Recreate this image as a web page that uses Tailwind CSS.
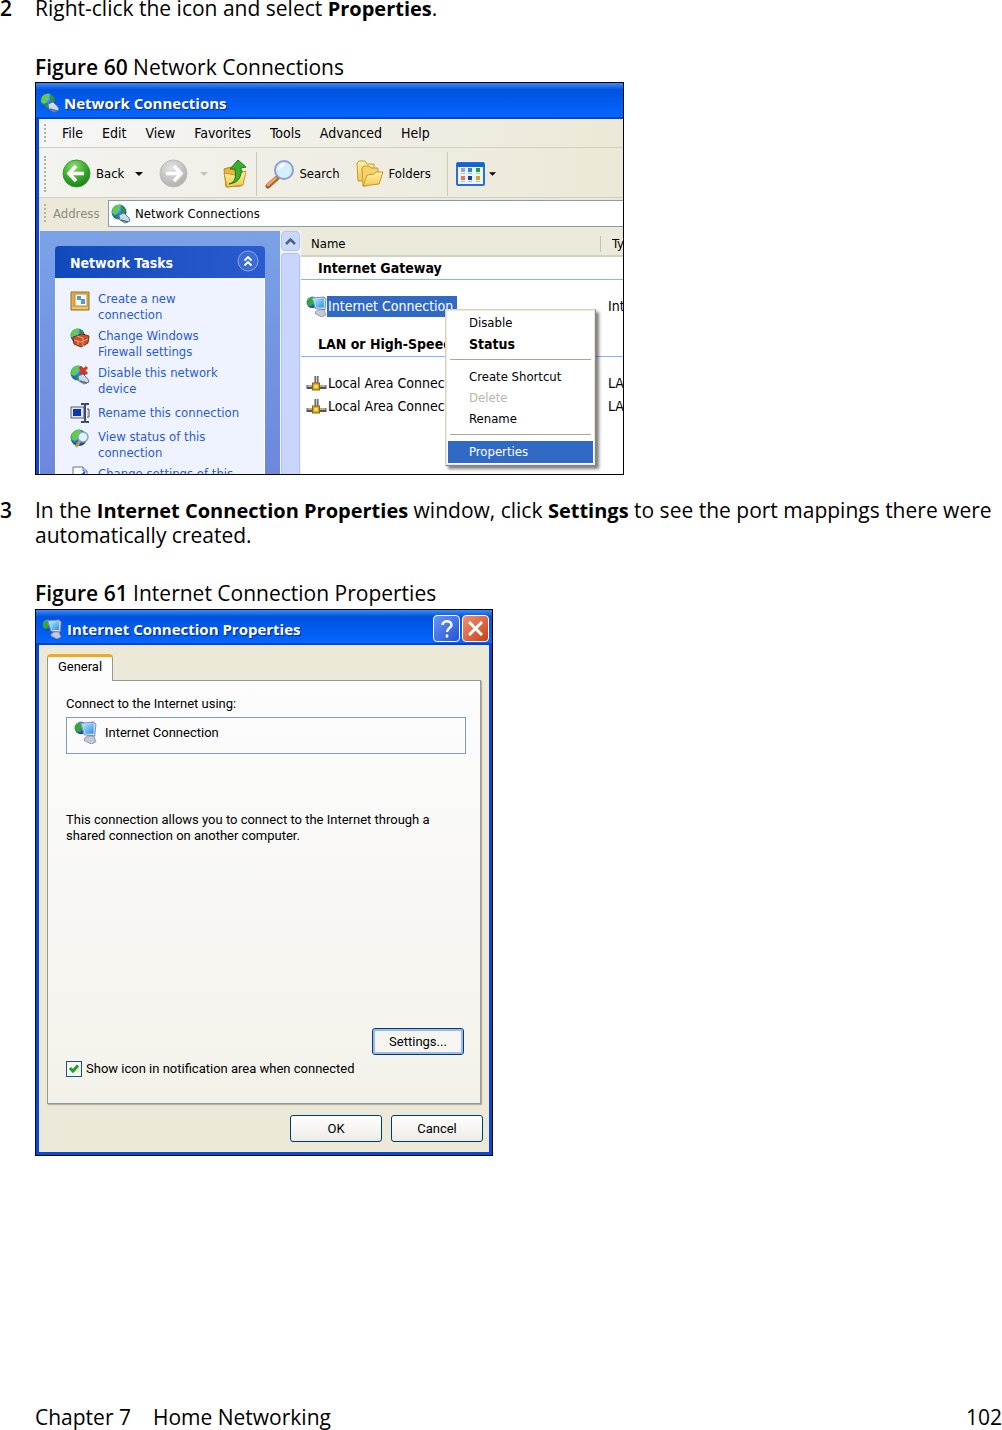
<!DOCTYPE html>
<html lang="en">
<head>
    <meta charset="UTF-8">
    <meta name="viewport" content="width=device-width, initial-scale=1.0">
    <title>Chapter 7 Home Networking</title>
    <script src="https://cdn.jsdelivr.net/npm/@tailwindcss/browser@4"></script>
</head>
<body class="bg-white text-black font-['Open_Sans',sans-serif] text-[21px] leading-[25px]">
    <!-- Shared icons -->
    <svg class="absolute size-0">
        <defs>
            <linearGradient id="screen" x1="0" y1="0" x2="1" y2="1">
                <stop offset="0" stop-color="#b5f0ff" />
                <stop offset="1" stop-color="#2f8fe6" />
            </linearGradient>
            <linearGradient id="folder" x1="0" y1="0" x2="0" y2="1">
                <stop offset="0" stop-color="#fff3a6" />
                <stop offset="1" stop-color="#f2c84b" />
            </linearGradient>
            <radialGradient id="ocean" cx="0.35" cy="0.3" r="0.75">
                <stop offset="0" stop-color="#8fd0ff" />
                <stop offset="0.5" stop-color="#2877d8" />
                <stop offset="1" stop-color="#0b3f96" />
            </radialGradient>
            <radialGradient id="green" cx="0.4" cy="0.25" r="0.8">
                <stop offset="0" stop-color="#8be06c" />
                <stop offset="0.6" stop-color="#35a52b" />
                <stop offset="1" stop-color="#1c7a17" />
            </radialGradient>
            <radialGradient id="gray" cx="0.4" cy="0.3" r="0.8">
                <stop offset="0" stop-color="#e4e4e2" />
                <stop offset="1" stop-color="#a9a9a9" />
            </radialGradient>
        </defs>
        <symbol id="globe" viewBox="0 0 20 20">
            <circle cx="8" cy="8" r="7.5" fill="url(#ocean)" />
            <path d="M2 4C4 1 8 0 10 1L9 4L6 6L7 9L4 11L1 9Z" fill="#5fd03c" />
            <path d="M11 3L14 4L15 8L12 9L10 6ZM5 12L8 12L9 15L6 15Z" fill="#2f9a22" />
        </symbol>
        <symbol id="net-globe" viewBox="0 0 20 20">
            <use href="#globe" width="20" height="20" />
            <path d="M8 11L13 9L18 14L19 17L14 19L9 16Z" fill="#c9dcec" stroke="#5f7f9f" />
            <path d="M10 16L17 18" stroke="#5d6b78" stroke-width="1.5" />
        </symbol>
        <symbol id="net-pc" viewBox="0 0 20 20">
            <circle cx="6" cy="6" r="5.5" fill="url(#ocean)" />
            <path d="M1 4L5 1L7 3L6 8L4 10L1 8Z" fill="#36a829" />
            <path d="M6 2L17 1L19 3L18 13L9 12Z" fill="#d7ddea" stroke="#8693b4" />
            <path d="M7 3L17 2L17 11L10 11Z" fill="url(#screen)" />
            <path d="M12 13L17 13L19 18L15 20L9 17L9 15Z" fill="#c5c9da" stroke="#7b82a0" stroke-width=".7" />
        </symbol>
        <symbol id="lan" viewBox="0 0 20 16">
            <path d="M10 1V10M0 12H20" stroke="#555" stroke-width="4" />
            <path d="M10 1V9M1 11H19" stroke="#c9c9c9" stroke-width="1.5" />
            <rect x="6" y="8" width="7" height="7" fill="#e2a81b" stroke="#8a6510" />
            <rect x="8" y="10" width="3" height="3" fill="#ffe88a" />
        </symbol>
    </svg>

    <div class="min-h-screen flex flex-col">
        <main>
            <p class="flex leading-4"><span class="w-[35px] shrink-0 font-semibold">2</span><span>Right-click the icon and select <b class="text-[20px]">Properties</b>.</span></p>

            <!-- Figure 60 -->
            <figure class="pl-[35px] mt-[38px]">
                <figcaption class="mb-0.5"><span class="font-semibold">Figure 60</span> Network Connections</figcaption>
                <div class="relative w-full max-w-[589px] h-[393px] overflow-hidden flex flex-col border border-black bg-[#ece9d8] font-['DejaVu_Sans_Condensed','DejaVu_Sans',sans-serif] text-[13px] leading-4">
                    <div class="h-9 shrink-0 flex items-center gap-1 px-1 pt-1.5 bg-linear-to-b from-[#3c8cf5] via-[#0052e0] via-20% to-[#0566ff] border-b-2 border-[#0045d0]">
                        <svg class="size-5"><use href="#net-globe" /></svg>
                        <h2 class="text-white font-bold font-['Open_Sans',sans-serif] text-[15px] [text-shadow:1px_1px_1px_#0a2a80]">Network Connections</h2>
                    </div>
                    <div class="flex-1 min-h-0 flex flex-col border-l-3 border-[#0848d8]">
                        <!-- Menu bar -->
                        <div class="h-[29px] shrink-0 flex items-center gap-[19px] pl-[5px] text-[14px] border-b border-[#d3cfbd] bg-linear-to-r from-[#f6f6f6] to-[#ece9d8]">
                            <span class="h-[18px] -mr-[3px] border-l-2 border-dotted border-[#b5b2a4]"></span>
                            <button>File</button>
                            <button>Edit</button>
                            <button>View</button>
                            <button>Favorites</button>
                            <button>Tools</button>
                            <button>Advanced</button>
                            <button>Help</button>
                        </div>
                        <!-- Toolbar -->
                        <div class="h-[50px] shrink-0 flex items-center pl-[5px] pt-0.5 border-b border-[#d3cfbd] bg-linear-to-r from-[#f3f3f0] to-[#ece9d8]">
                            <span class="h-9 mr-4 border-l-2 border-dotted border-[#b5b2a4]"></span>
                            <button class="flex items-center gap-[5px]">
                                <svg class="size-[29px]" viewBox="0 0 29 29">
                                    <circle cx="14.5" cy="14.5" r="13.5" fill="url(#green)" stroke="#3b9a33" />
                                    <path d="M14 7L7 14.5L14 22M7.500 14.500H22" stroke="#fff" stroke-width="3.500" fill="none" />
                                </svg>
                                Back
                                <svg class="w-2 h-1 ml-1.5" viewBox="0 0 8 4"><path d="M0 0H8L4 4Z" /></svg>
                            </button>
                            <button class="flex items-center gap-3 ml-4" aria-label="Forward">
                                <svg class="size-[29px]" viewBox="0 0 29 29">
                                    <circle cx="14.5" cy="14.5" r="13.5" fill="url(#gray)" stroke="#bcbcbc" />
                                    <path d="M15 7L22 14.5L15 22M21.500 14.500H7" stroke="#fff" stroke-width="3.500" fill="none" />
                                </svg>
                                <svg class="w-2 h-1" viewBox="0 0 8 4"><path d="M0 0H8L4 4Z" fill="#c5c3b8" /></svg>
                            </button>
                            <button class="ml-3.5" aria-label="Up">
                                <svg class="w-[26px] h-[30px]" viewBox="0 0 26 30">
                                    <path d="M2 10L9 8L11 11L21 12L19 27L4 28Z" fill="#e9b73c" stroke="#b98718" />
                                    <path d="M2 14L13 16L24 12L21 26L5 28Z" fill="url(#folder)" stroke="#c9952a" />
                                    <path d="M7 25C14 23 14 17 13 10L8 10L16 1L24 8L19 9C20 17 17 24 7 25Z" fill="#3cae30" stroke="#197b15" />
                                </svg>
                            </button>
                            <span class="w-px h-11 mx-2 bg-[#cdc9b5]"></span>
                            <button class="flex items-center gap-1">
                                <svg class="size-[30px]" viewBox="0 0 30 30">
                                    <path d="M12 19L3 27" stroke="#a35f28" stroke-width="5" stroke-linecap="round" />
                                    <path d="M11 19L3 26" stroke="#eba464" stroke-width="2.500" stroke-linecap="round" />
                                    <circle cx="19" cy="11" r="9" fill="#d2f0ff" stroke="#8d9fd4" stroke-width="2" />
                                    <path d="M13 11C13 7 17 4 21 5C18 7 17 9 13 11Z" fill="#fff" />
                                </svg>
                                Search
                            </button>
                            <button class="flex items-center gap-[5px] ml-4">
                                <svg class="w-7 h-[28px]" viewBox="0 0 28 28">
                                    <path d="M1 3L3 1H9L11 4H18V8L8 21H2Z" fill="url(#folder)" stroke="#c9982c" />
                                    <path d="M6 8L8 6H13L15 8H22V14L10 26H7Z" fill="#f5d56b" stroke="#c9982c" />
                                    <path d="M7 26L11 15L18 14L20 12H27L23 24Z" fill="url(#folder)" stroke="#c9982c" />
                                </svg>
                                Folders
                            </button>
                            <span class="w-px h-11 ml-4 mr-2 bg-[#cdc9b5]"></span>
                            <button class="flex items-center gap-1" aria-label="Views">
                                <svg class="w-[29px] h-6" viewBox="0 0 29 24">
                                    <rect x="1" y="1" width="27" height="22" rx="1" fill="#eaf5ff" stroke="#2b6fd4" stroke-width="2" />
                                    <path d="M1 3H28" stroke="#1463d6" stroke-width="4" />
                                    <path d="M5 11.500H9M12 11.500H16M20 11.500H24M5 19.500H9M12 19.500H16M20 19.500H24" stroke="#b8bfc9" />
                                    <path d="M5 8H9" stroke="#a79bd4" stroke-width="4" /><path d="M12 8H16" stroke="#2b86e0" stroke-width="4" /><path d="M20 8H24" stroke="#18a428" stroke-width="4" />
                                    <path d="M5 16H9" stroke="#f0744a" stroke-width="4" /><path d="M12 16H16" stroke="#123fa8" stroke-width="4" /><path d="M20 16H24" stroke="#d7a51e" stroke-width="4" />
                                </svg>
                                <svg class="w-[7px] h-1" viewBox="0 0 8 4"><path d="M0 0H8L4 4Z" /></svg>
                            </button>
                        </div>
                        <!-- Address bar -->
                        <div class="h-[33px] shrink-0 flex pl-[5px] pt-0.5 pb-1">
                            <span class="h-[18px] mt-1 mr-[7px] border-l-2 border-dotted border-[#b5b2a4]"></span>
                            <label for="address" class="w-[55px] self-center text-[#8d8b80]">Address</label>
                            <div class="flex-1 flex items-center gap-1 pl-0.5 pt-px bg-white border border-r-0 border-[#7f9db9]">
                                <svg class="size-5"><use href="#net-globe" /></svg>
                                <input id="address" class="flex-1 min-w-0 outline-none" value="Network Connections">
                            </div>
                        </div>

                        <div class="flex-1 min-h-0 flex">
                            <!-- Task pane -->
                            <aside class="w-[241px] shrink-0 px-[15px] pt-[15px] bg-linear-to-b from-[#7ba2e7] to-[#6d87dc] border-l border-[#ece9d8]">
                                <div class="h-8 flex items-center justify-between pl-[15px] pr-1.5 pt-0.5 rounded-t-[4px] bg-linear-to-r from-[#0f4abb] to-[#2a5bcf] text-white">
                                    <h3 class="font-bold text-[14px]">Network Tasks</h3>
                                    <button aria-label="Collapse">
                                        <svg class="size-[22px] -mt-1" viewBox="0 0 22 22">
                                            <circle cx="11" cy="11" r="10" fill="#3d6cd2" stroke="#86a8ec" />
                                            <path d="M7.500 10.500L11 7L14.500 10.500M7.500 15.500L11 12L14.500 15.500" fill="none" stroke="#fff" stroke-width="1.800" />
                                        </svg>
                                    </button>
                                </div>
                                <ul class="flex flex-col gap-[5px] px-3.5 pt-[13px] pb-8 bg-[#eff3ff] border border-t-0 border-white text-[#2a5bcf]">
                                    <li class="flex gap-2">
                                        <svg class="size-5 shrink-0" viewBox="0 0 20 20">
                                            <path d="M1 1H19V19H1Z" fill="#dcae4a" stroke="#9a7020" />
                                            <path d="M5 3H17V15H5Z" fill="#fdf8e8" stroke="#b98f3d" />
                                            <path d="M7 5H11V9H7ZM11 8H15V13H11Z" fill="#4b9be6" />
                                            <path d="M2 17H18" stroke="#f8dd96" />
                                        </svg>
                                        <a href="#">Create a new<br>connection</a>
                                    </li>
                                    <li class="flex gap-2">
                                        <svg class="size-5 shrink-0" viewBox="0 0 20 20">
                                            <use href="#globe" width="19" height="19" />
                                            <path d="M3 9L12 6L19 8L18 15L11 19L4 16Z" fill="#c9512b" stroke="#7d2b12" />
                                            <path d="M4 12L11 14L18 11M7 8L13 10L13 18M8 13V17" fill="none" stroke="#f0a078" />
                                        </svg>
                                        <a href="#">Change Windows<br>Firewall settings</a>
                                    </li>
                                    <li class="flex gap-2">
                                        <svg class="size-5 shrink-0" viewBox="0 0 20 20">
                                            <use href="#net-globe" width="20" height="20" />
                                            <path d="M10 2L17 9M17 2L10 9" stroke="#e3301a" stroke-width="3" />
                                        </svg>
                                        <a href="#">Disable this network<br>device</a>
                                    </li>
                                    <li class="flex items-center gap-2 min-h-[22px]">
                                        <svg class="size-5 shrink-0" viewBox="0 0 20 20">
                                            <rect x="1" y="4" width="13" height="11" fill="#e4e6ee" stroke="#596078" />
                                            <rect x="3" y="6" width="8" height="7" fill="#0d37ae" />
                                            <path d="M11 1H14L15 2L16 1H19M15 2V18M11 19H14L15 18L16 19H19" fill="none" stroke="#444b5c" stroke-width="2" />
                                            <path d="M17 6H19V14H17" fill="#cdd0da" stroke="#596078" />
                                        </svg>
                                        <a href="#" class="whitespace-nowrap">Rename this connection</a>
                                    </li>
                                    <li class="flex gap-2">
                                        <svg class="size-5 shrink-0" viewBox="0 0 20 20">
                                            <use href="#globe" width="22" height="22" />
                                            <path d="M10 12L6 18" stroke="#c79a4a" stroke-width="2.500" />
                                            <circle cx="13" cy="8" r="5" fill="#dff3ff" stroke="#8fa0b8" stroke-width="1.500" />
                                        </svg>
                                        <a href="#">View status of this<br>connection</a>
                                    </li>
                                    <li class="flex gap-2">
                                        <svg class="size-5 shrink-0" viewBox="0 0 20 20">
                                            <path d="M3 1H13L17 5V19H3Z" fill="#fff" stroke="#5a78a8" />
                                            <path d="M13 1V5H17" fill="#bfd3f0" stroke="#5a78a8" />
                                            <path d="M6 9L9 12L15 6" fill="none" stroke="#2a5bcf" stroke-width="2" />
                                        </svg>
                                        <a href="#" class="whitespace-nowrap">Change settings of this<br>connection</a>
                                    </li>
                                </ul>
                            </aside>
                            <!-- Scrollbar -->
                            <div class="w-[21px] shrink-0 flex flex-col gap-0.5 px-px bg-[#f3f4fb]">
                                <button class="h-5 shrink-0 grid place-items-center rounded-sm border border-[#b3c3f0] bg-[#cad7fb]" aria-label="Scroll up">
                                    <svg class="w-[11px] h-[7px]" viewBox="0 0 11 7"><path d="M1 6L5.500 1.500L10 6" fill="none" stroke="#4d6185" stroke-width="2.500" /></svg>
                                </button>
                                <div class="flex-1 rounded-t-sm border border-b-0 border-[#b3c3f0] bg-[#c8d5fc]"></div>
                            </div>
                            <!-- Connection list -->
                            <div class="flex-1 min-w-0 overflow-hidden bg-white">
                                <table class="table-fixed w-[440px] whitespace-nowrap text-[14px]">
                                    <thead>
                                        <tr class="h-[25px] bg-[#ebeadb] text-left text-[13px]">
                                            <th class="w-[299px] pl-[10px] pt-0.5 font-normal border-b-2 border-[#d6d2c2]">Name</th>
                                            <th class="pt-0.5 font-normal border-b-2 border-[#d6d2c2]"><span class="inline-block pl-[11px] border-l border-[#c5c2b2]">Type</span></th>
                                        </tr>
                                    </thead>
                                    <tbody>
                                        <tr class="h-[23px]"><th colspan="2" class="pl-[17px] text-left font-bold border-b border-[#86b4f4]">Internet Gateway</th></tr>
                                        <tr class="h-[54px]">
                                            <td class="pl-[5px]"><div class="flex items-center"><svg class="size-[21px]"><use href="#net-pc" /></svg><span class="h-[21px] pt-0.5 pl-px pr-1 bg-[#316ac5] text-white">Internet Connection</span></div></td>
                                            <td class="pl-[8px]">Internet Gateway</td>
                                        </tr>
                                        <tr class="h-[23px]"><th colspan="2" class="pl-[17px] text-left font-bold border-b border-[#86b4f4]">LAN or High-Speed Internet</th></tr>
                                        <tr class="h-[15px]"></tr>
                                        <tr class="h-[23px]">
                                            <td class="pl-[5px]"><div class="flex items-center gap-px"><svg class="w-[21px] h-4"><use href="#lan" /></svg>Local Area Connection</div></td>
                                            <td class="pl-[8px]">LAN or High-Speed</td>
                                        </tr>
                                        <tr class="h-[23px]">
                                            <td class="pl-[5px]"><div class="flex items-center gap-px"><svg class="w-[21px] h-4"><use href="#lan" /></svg>Local Area Connection 2</div></td>
                                            <td class="pl-[8px]">LAN or High-Speed</td>
                                        </tr>
                                    </tbody>
                                </table>
                            </div>
                        </div>
                    </div>

                    <!-- Context menu -->
                    <div class="absolute left-[409px] top-[226px] w-[151px] flex flex-col p-0.5 bg-white border border-[#d8d4c4] border-r-[#8a8778] border-b-[#8a8778] shadow-[3px_3px_3px_#00000080] outline-1 -outline-offset-2 outline-[#ece9d8]">
                        <button class="h-[21px] pl-[21px] text-left">Disable</button>
                        <button class="h-[21px] pl-[21px] text-left text-[14px] font-bold">Status</button>
                        <hr class="mt-[5px] mb-1.5 mx-0.5 border-t border-[#aca899]">
                        <button class="h-[21px] pl-[21px] text-left">Create Shortcut</button>
                        <button class="h-[21px] pl-[21px] text-left text-[#b8b5a8]">Delete</button>
                        <button class="h-[21px] pl-[21px] text-left">Rename</button>
                        <hr class="mt-[5px] mb-1.5 mx-0.5 border-t border-[#aca899]">
                        <button class="h-[22px] pl-[21px] text-left text-white bg-[#316ac5]">Properties</button>
                    </div>
                </div>
            </figure>

            <p class="flex mt-[23px]"><span class="w-[35px] shrink-0 font-semibold">3</span><span>In the <b class="text-[20px]">Internet Connection Properties</b> window, click <b class="text-[20px]">Settings</b> to see the port mappings there were automatically created.</span></p>

            <!-- Figure 61 -->
            <figure class="pl-[35px] mt-[33px]">
                <figcaption class="mb-[3px]"><span class="font-semibold">Figure 61</span> Internet Connection Properties</figcaption>
                <div class="w-full max-w-[458px] border border-black bg-[#ece9d8] font-[Roboto,'Liberation_Sans',sans-serif] text-[13px] leading-4">
                    <div class="h-[35px] flex items-center gap-[5px] pl-1.5 pr-[3px] pt-1 bg-linear-to-b from-[#3c8cf5] via-[#0052e0] via-20% to-[#0566ff] border-b-2 border-[#0045d0]">
                        <svg class="size-5"><use href="#net-pc" /></svg>
                        <h2 class="flex-1 text-white font-bold font-['Open_Sans',sans-serif] text-[15px] [text-shadow:1px_1px_1px_#0a2a80]">Internet Connection Properties</h2>
                        <button class="size-[27px] grid place-items-center rounded-[4px] border border-white bg-linear-to-br from-[#6a94f4] to-[#2353d8]" aria-label="Help">
                            <svg class="w-3 h-[18px]" viewBox="0 0 12 18"><path d="M1.500 5C1.500 0 10.500 0 10.500 5C10.500 8 6 8 6 12M6 14.500V17.500" fill="none" stroke="#fff" stroke-width="2.500" /></svg>
                        </button>
                        <button class="size-[27px] -ml-[3px] grid place-items-center rounded-[4px] border border-white bg-linear-to-br from-[#f09070] to-[#cc3a10]" aria-label="Close">
                            <svg class="size-[15px]" viewBox="0 0 15 15"><path d="M1 1L14 14M14 1L1 14" stroke="#fff" stroke-width="3" /></svg>
                        </button>
                    </div>
                    <div class="px-2 pt-[9px] pb-[10px] border-x-3 border-b-3 border-[#0848d8]">
                        <button class="relative block h-[27px] w-[66px] -mb-px pb-1 rounded-t-[4px] border-x border-t-3 border-x-[#919b9c] border-t-[#f5a623] bg-[#fdfdfe]">General</button>
                        <div class="flex flex-col px-[18px] pt-[15px] pb-[26px] border border-[#919b9c] shadow-[1px_1px_1px_#b8b5a6] bg-linear-to-b from-[#fdfdfe] to-[#f3f2ea]">
                            <p>Connect to the Internet using:</p>
                            <div class="h-[37px] mt-[5px] mr-[-4px] flex items-center gap-2 px-[7px] pb-1.5 border border-[#7f9db9]">
                                <svg class="size-[23px]"><use href="#net-pc" /></svg>
                                Internet Connection
                            </div>
                            <p class="mt-[58px]">This connection allows you to connect to the Internet through a<br>shared connection on another computer.</p>
                            <button class="self-end mt-[184px] -mr-0.5 h-[27px] w-[92px] rounded-[3px] border border-[#003c74] bg-[#f6f5f0] shadow-[inset_0_0_0_2px_#9db9ee]">Settings...</button>
                            <label class="flex items-center gap-1 mt-1.5">
                                <span class="grid size-4">
                                    <input type="checkbox" checked class="peer col-start-1 row-start-1 appearance-none size-4 border border-[#1c5180] bg-[#f6f6f2]">
                                    <svg class="col-start-1 row-start-1 size-4 pointer-events-none hidden peer-checked:block" viewBox="0 0 16 16"><path d="M4 7L7 10L12 4.500" fill="none" stroke="#21a121" stroke-width="3" /></svg>
                                </span>
                                Show icon in notification area when connected
                            </label>
                        </div>
                        <div class="flex justify-end gap-[9px] mt-[11px] -mr-0.5">
                            <button class="h-[27px] w-[92px] rounded-[3px] border border-[#003c74] bg-linear-to-b from-white to-[#edebe4]">OK</button>
                            <button class="h-[27px] w-[92px] rounded-[3px] border border-[#003c74] bg-linear-to-b from-white to-[#edebe4]">Cancel</button>
                        </div>
                    </div>
                </div>
            </figure>
        </main>

        <footer class="mt-auto pl-[35px] flex justify-between">
            <span class="flex gap-[22px]"><span>Chapter 7</span><span>Home Networking</span></span>
            <span>102</span>
        </footer>
    </div>
</body>
</html>
